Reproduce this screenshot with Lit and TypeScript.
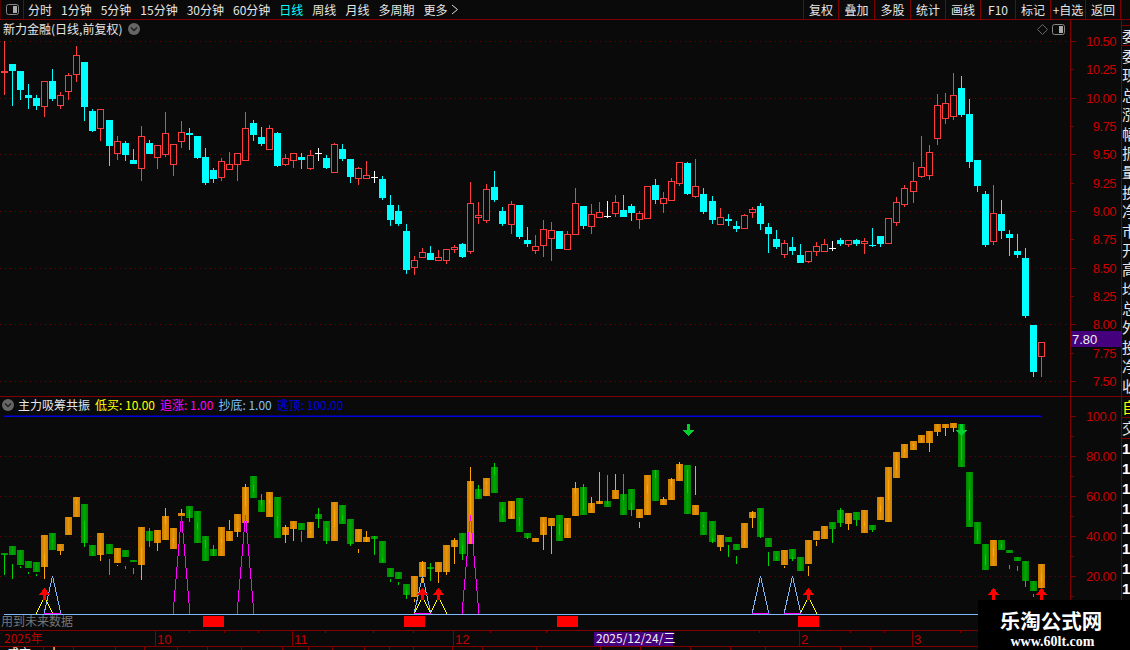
import { LitElement, html, svg, css } from "lit";
import { customElement } from "lit/decorators.js";

type Main = [string, number, number, number, number];
const M: Main[] = [
["r",71,73,41,95],["c",64,71,64,106],["c",71,90,71,100],["c",95,98,84,109],["c",98,106,95,110],
["r",81,107,81,117],["c",81,99,69,101],["r",95,106,92,109],["r",75,92,73,100],["r",55,75,46,82],
["c",62,107,62,121],["c",111,131,109,132],["r",109,129,109,141],["c",120,146,120,166],["r",141,154,136,160],
["c",143,155,141,161],["c",160,164,149,164],["r",136,169,126,181],["c",143,154,140,154],["r",145,158,145,169],
["r",133,155,112,157],["r",144,165,144,176],["r",132,142,121,148],["c",133,135,128,150],["c",136,158,136,159],
["c",157,183,148,185],["c",170,179,168,183],["r",161,178,158,181],["r",164,170,152,170],["r",153,165,153,181],
["r",128,161,112,161],["c",123,135,120,141],["c",137,144,127,146],["r",128,150,125,150],["c",133,166,132,167],
["r",158,165,154,166],["r",153,161,153,168],["c",157,160,153,169],["r",155,169,150,170],["w",153,154,148,161],
["c",158,168,155,169],["r",144,173,143,173],["c",149,159,144,161],["c",159,177,159,183],["r",168,179,167,185],
["r",175,179,161,179],["w",177,178,171,183],["c",179,198,176,200],["c",205,220,195,226],["c",211,224,205,226],
["c",231,270,224,274],["r",260,268,256,275],["r",252,258,248,258],["c",253,260,246,260],["r",257,261,250,261],
["r",249,261,249,264],["r",247,250,245,253],["c",244,257,243,258],["r",203,252,182,254],["r",215,218,202,224],
["r",189,221,184,223],["c",187,200,171,202],["c",211,224,207,226],["r",204,225,201,234],["c",205,237,205,239],
["c",240,244,227,247],["r",246,251,235,254],["r",229,246,220,257],["r",230,239,222,261],["c",231,249,231,249],
["r",234,250,231,250],["r",203,235,188,235],["c",206,226,206,229],["r",214,227,204,234],["r",212,218,202,218],
["w",216,217,201,218],["r",202,214,195,217],["c",210,217,195,217],["c",206,213,204,221],["r",213,220,211,229],
["r",186,219,186,219],["c",185,200,179,204],["r",198,204,192,213],["r",181,201,178,201],["r",162,184,162,186],
["c",163,194,162,195],["r",186,197,159,198],["c",194,212,188,214],["c",201,220,196,224],["r",217,225,208,225],
["c",219,221,214,226],["c",226,229,221,232],["r",215,229,214,229],["r",209,213,207,218],["c",206,224,203,230],
["c",227,234,223,253],["c",239,247,230,249],["r",243,255,240,258],["c",247,251,237,255],["c",255,263,244,263],
["r",251,262,251,263],["r",246,252,242,256],["r",244,252,239,252],["w",248,249,241,251],["c",240,244,238,246],
["r",240,245,240,247],["c",240,244,239,246],["r",241,244,238,254],["c",245,246,228,247],["c",236,244,236,247],
["r",218,244,218,244],["r",202,223,197,226],["r",188,205,185,207],["r",181,192,162,203],["r",167,177,136,178],
["r",152,176,145,180],["r",105,139,94,145],["r",103,119,93,124],["r",95,117,73,120],["c",88,115,76,117],
["c",114,162,99,168],["c",160,186,160,192],["c",194,245,191,247],["r",213,242,185,245],["c",214,231,200,239],
["c",234,238,230,256],["c",251,255,234,258],["c",258,316,248,318],["c",325,372,325,377],["r",342,357,342,377],
];

const L: Main[] = [
["g",553,555,555,575],["g",546,555,564,579],["g",550,565,566,568],["g",561,568,572,574],["g",562,572,574,576],
["o",535,567,554,579],["g",533,550,540,542],["o",544,551,551,555],["o",517,535,0,0],["o",497,517,501,504],
["g",504,543,521,547],["g",545,556,552,554],["o",533,555,553,561],["g",544,554,559,575],["o",548,563,565,566],
["g",550,557,566,569],["g",560,561,568,574],["o",527,565,548,580],["g",531,541,528,547],["o",530,543,543,551],
["o",516,540,508,524],["o",528,549,538,543],["o",513,516,509,516],["g",506,518,510,522],["g",511,543,523,529],
["g",536,561,540,548],["g",549,556,545,556],["o",527,556,539,543],["o",531,541,520,530],["o",514,532,528,537],
["o",487,523,484,506],["g",476,498,485,492],["g",500,512,494,505],["o",492,517,500,503],["g",497,538,516,527],
["o",527,535,525,543],["o",521,529,529,541],["g",523,530,531,542],["o",522,538,531,533],["g",514,519,508,528],
["g",521,541,528,544],["o",502,541,510,527],["g",505,524,515,521],["g",519,544,540,546],["o",529,542,549,553],
["o",537,542,531,542],["g",536,539,536,555],["g",541,563,558,562],["g",568,577,579,582],["g",572,579,582,585],
["g",584,595,590,599],["o",576,597,599,602],["o",562,577,561,583],["g",567,568,563,581],["o",562,572,572,583],
["o",545,572,570,575],["o",540,547,538,564],["g",533,554,545,560],["o",481,544,467,520],["g",489,499,485,497],
["o",478,496,482,484],["g",467,493,463,475],["g",502,522,508,514],["o",501,519,511,518],["g",498,532,517,526],
["g",533,538,536,539],["o",538,542,0,0],["o",517,535,523,550],["o",518,526,526,554],["g",515,541,524,535],
["o",518,538,524,535],["o",488,516,482,493],["g",487,515,484,510],["o",503,513,497,508],["o",501,504,472,504],
["g",501,507,475,504],["o",490,499,474,490],["g",494,515,474,500],["g",489,510,503,516],["o",509,518,522,528],
["o",475,515,485,493],["g",470,501,470,478],["o",499,505,497,500],["o",479,500,478,485],["o",464,481,462,470],
["g",465,514,470,493],["o",505,515,466,495],["g",512,535,525,527],["g",521,542,538,543],["o",535,547,547,551],
["g",537,542,545,557],["g",544,550,556,564],["o",523,548,540,544],["o",512,518,511,528],["g",508,537,521,538],
["g",538,547,552,566],["g",551,561,557,559],["o",550,565,566,568],["g",549,559,557,561],["g",557,571,0,0],
["o",540,564,566,576],["o",531,540,541,546],["o",526,539,0,0],["g",522,529,529,543],["g",510,523,508,527],
["o",513,524,524,530],["g",512,520,520,526],["o",510,533,522,526],["g",525,530,530,532],["o",497,520,505,512],
["o",467,522,480,500],["o",452,478,460,470],["o",444,458,449,452],["o",441,450,444,446],["o",435,443,438,440],
["o",431,443,443,452],["o",424,432,432,436],["o",424,428,428,436],["o",423,428,428,432],["g",424,467,430,460],
["g",472,527,490,520],["g",522,544,530,540],["g",544,570,555,565],["o",540,566,548,556],["g",540,550,544,548],
["g",550,553,565,569],["g",557,561,566,571],["g",561,581,581,587],["g",581,591,594,597],["o",564,588,574,582],
];

const cx = (i: number) => Math.round(4 + 8.04 * i);
const BG = "#0a0a0a";
const RED = "#ff3c3c";
const AX = "#800000";

function mainCandle(d: Main, i: number) {
  const [t, top, bot, hi, lo] = d;
  const c = cx(i);
  const col = t === "r" ? RED : t === "c" ? "#00ffff" : "#ffffff";
  const wick = svg`<rect x=${c} y=${hi} width="1" height=${lo - hi} fill=${col}></rect>`;
  if (t === "w" || t === "c" || bot - top <= 2) {
    return svg`${wick}<rect x=${c - 3} y=${top} width="7" height=${bot - top} fill=${col}></rect>`;
  }
  return svg`${wick}<rect x=${c - 2.5} y=${top + 0.5} width="6" height=${bot - top - 1} fill=${BG} stroke=${col}></rect>`;
}

function lowerCandle(d: Main, i: number) {
  const [t, top, bot, w1, w2] = d;
  const c = cx(i);
  const fill = t === "o" ? "url(#gO)" : "url(#gG)";
  const wc = t === "o" ? "#ffa800" : "#00d400";
  return svg`<rect x=${c - 3} y=${top} width="7" height=${Math.max(bot - top, 2)} fill=${fill}></rect>
    ${w2 > w1 ? svg`<rect x=${c} y=${w1} width="1" height=${w2 - w1} fill=${wc}></rect>` : ""}`;
}

const peak = (c: number, top: number, col: string) =>
  svg`<polyline points="${c - 8},614 ${c + 0.5},${top} ${c + 9},614" fill="none" stroke=${col} stroke-width="1" shape-rendering="crispEdges"></polyline>`;

const up = (c: number) => svg`<path d="M${c - 5} 594.5L${c + 0.5} 588L${c + 6} 594.5L${c + 2} 594.5L${c + 2} 600L${c - 1} 600L${c - 1} 594.5Z" fill="#ff0000" shape-rendering="crispEdges"></path>`;
const down = (c: number, y: number) => svg`<path d="M${c - 1} ${y}L${c + 2} ${y}L${c + 2} ${y + 6}L${c + 6} ${y + 6}L${c + 0.5} ${y + 12.5}L${c - 5} ${y + 6}L${c - 1} ${y + 6}Z" fill="#00d02c" shape-rendering="crispEdges"></path>`;

const dotted = (y: number) => svg`<line x1="0" x2="1066" y1=${y + 0.5} y2=${y + 0.5} stroke="#6e0000" stroke-dasharray="1 4"></line>`;
const tick = (y: number, len: number) => svg`<rect x="1071" y=${y} width=${len} height="1" fill=${AX}></rect>`;
const label = (y: number, s: string) => svg`<text class="ax" x="1116" y=${y + 5} text-anchor="end">${s}</text>`;

const topPrices = ["10.50", "10.25", "10.00", "9.75", "9.50", "9.25", "9.00", "8.75", "8.50", "8.25", "8.00", "7.75", "7.50"];
const lowVals = [["100.0", 416], ["80.00", 456], ["60.00", 496], ["40.00", 536], ["20.00", 576]] as [string, number][];
const menu = ["分时", "1分钟", "5分钟", "15分钟", "30分钟", "60分钟", "日线", "周线", "月线", "多周期", "更多"];
const btns = ["复权", "叠加", "多股", "统计", "画线", "F10", "标记", "+自选", "返回"];
const sideTop = "委委现总涨幅振量换净市开高均总外投净收".split("");
const sideLow = ["交", "1", "1", "1", "1", "1", "1", "1", "1", "1"];
const dateSeps = [[155, "10"], [292, "11"], [453, "12"], [799, "2"], [912, "3"]] as [number, string][];
const dateTicks = [189, 224, 258, 325, 373, 413, 490, 546, 640, 759, 850, 884, 960, 1010];
const tailSeps = [43, 73, 115, 144, 177, 207, 241, 282, 308, 332, 364, 389, 413, 452, 482, 536, 600, 640, 690, 730, 765, 840, 870];

@customElement("app-root")
export class AppRoot extends LitElement {
  static styles = css`
    :host { display: block; width: 1130px; height: 650px; overflow: hidden; background: #0a0a0a; color: #e6e6e6;
      font-family: "Noto Sans CJK SC", "Liberation Sans", sans-serif; font-size: 12px; line-height: 1; }
    .root { position: relative; width: 1130px; height: 650px; display: flex; flex-direction: column; }
    .top { height: 19px; border-bottom: 1px solid #800000; display: flex; align-items: center; flex: none; }
    .tog { width: 22px; height: 19px; border-right: 1px solid #800000; border-left: 1px solid #500000; display: flex; align-items: center; justify-content: center; flex: none; }
    .menu { display: flex; gap: 9px; margin-left: 4px; align-items: center; }
    .menu .on { color: #00ffff; }
    .more { display: flex; align-items: center; gap: 4px; }
    .btns { margin-left: auto; margin-right: 9px; display: flex; height: 19px; border-left: 1px solid #800000; }
    .btn { width: 34px; border-right: 1px solid #800000; display: flex; align-items: center; justify-content: center; white-space: nowrap; }
    .btn.w { width: 35px; }
    .body { flex: 1; display: flex; min-height: 0; }
    .left { width: 1121px; flex: none; display: flex; flex-direction: column; }
    .pane { position: relative; flex: none; display: block; }
    .pane svg, .date svg, .tail svg { display: block; }
    .p1 { height: 376px; border-bottom: 1px solid #800000; }
    .p2 { height: 233px; border-bottom: 1px solid #800000; }
    .title { position: absolute; left: 3px; top: 3px; display: flex; align-items: center; gap: 6px; white-space: nowrap; }
    .dot { width: 12px; height: 12px; border-radius: 50%; background: #666; display: flex; align-items: center; justify-content: center; flex: none; }
    .tools { position: absolute; left: 1037px; top: 4px; display: flex; align-items: center; gap: 4px; }
    .ind { position: absolute; left: 2px; top: 2px; display: flex; align-items: center; gap: 5px; white-space: nowrap; }
    .ind .name { margin-left: -1px; }
    .y { color: #ffff00; } .m { color: #ff00ff; } .b { color: #80c0ff; } .d { color: #0000e0; }
    .date { height: 15px; border-bottom: 1px solid #800000; flex: none; }
    .tail { flex: 1; overflow: hidden; }
    .side { width: 9px; flex: none; border-left: 1px solid #800000; overflow: hidden; display: flex; flex-direction: column; }
    .sideTop { height: 377px; padding-top: 5px; box-sizing: border-box; border-bottom: 1px solid #800000; overflow: hidden; flex: none; }
    .sc { height: 19.4px; font-size: 15px; line-height: 19px; white-space: nowrap; }
    .sc.first { border-top: 1px solid #800000; border-bottom: 1px solid #800000; height: 19px; }
    .sideLow { flex: 1; overflow: hidden; }
    .sl { height: 20px; font-size: 15px; line-height: 20px; }
    .sl.yel { color: #ffff00; border-bottom: 1px solid #800000; }
    .sl.nb { border-bottom: 1px solid #800000; }
    .sl.num { font-weight: 700; font-family: "Liberation Sans", sans-serif; color: #fff; }
    .ax { font: 13px "Liberation Sans", sans-serif; letter-spacing: -0.5px; fill: #c80000; }
    .lbl { font: 13px "Liberation Sans", "Noto Sans CJK SC", sans-serif; fill: #c00000; }
    .lblc { font: 12px "Noto Sans CJK SC", sans-serif; fill: #c00000; }
    .datebox { font: 12px "Noto Sans CJK SC", sans-serif; fill: #f0f0f0; }
    .p7 { font: 13px "Liberation Sans", sans-serif; fill: #f0f0f0; }
    .futures { font: 12px "Noto Sans CJK SC", sans-serif; fill: #777; }
    .tailt { font: 12px "Noto Sans CJK SC", sans-serif; fill: #fff; }
    .mark { position: absolute; left: 978px; top: 600px; width: 152px; height: 50px; background: #000; color: #fff;
      display: flex; flex-direction: column; align-items: center; padding-top: 9px; box-sizing: border-box; }
    .mark .cn { font: 700 20.5px "Noto Sans CJK SC", sans-serif; line-height: 22px; margin-left: -6px; }
    .mark .url { font: 700 14px "Liberation Serif", serif; margin-top: 3px; margin-left: -3px; }
  `;

  render() {
    const toggle = html`<svg width="13" height="11" viewBox="0 0 13 11"><rect x="0.5" y="0.5" width="12" height="10" rx="2" fill="none" stroke="#888"></rect><rect x="7" y="2" width="4" height="7" fill="#aaa"></rect></svg>`;
    const chev = html`<svg width="8" height="6" viewBox="0 0 8 6"><path d="M1 1.5L4 4.5L7 1.5" fill="none" stroke="#1c1c1c" stroke-width="1.3"></path></svg>`;
    return html`<div class="root">
      <div class="top">
        <div class="tog">${toggle}</div>
        <div class="menu">
          ${menu.map((m) => m === "更多"
            ? html`<div class="more"><span>${m}</span><svg width="8" height="11" viewBox="0 0 8 11"><path d="M1 1L6.5 5.5L1 10" fill="none" stroke="#ddd"></path></svg></div>`
            : html`<span class=${m === "日线" ? "on" : ""}>${m}</span>`)}
        </div>
        <div class="btns">${btns.map((b) => html`<div class="btn ${b === "叠加" || b === "多股" ? "w" : ""}">${b}</div>`)}</div>
      </div>
      <div class="body">
        <div class="left">
          <div class="pane p1">
            <svg width="1121" height="376" viewBox="0 20 1121 376">
              ${[41, 98, 154, 211, 268, 324, 381].map(dotted)}
              ${M.map(mainCandle)}
              <rect x="1070" y="20" width="1" height="376" fill=${AX}></rect>
              ${topPrices.map((p, i) => {
                const y = Math.round(41 + i * 28.33);
                return svg`${tick(y, i % 2 ? 3 : 5)}${label(y, p)}`;
              })}
              <rect x="1071" y="331" width="50" height="16" fill="#45007d"></rect>
              <text class="p7" x="1072" y="344">7.80</text>
            </svg>
            <div class="title"><span>新力金融(日线,前复权)</span><div class="dot">${chev}</div></div>
            <div class="tools">
              <svg width="11" height="11" viewBox="0 0 11 11"><path d="M5.5 0.5L10.5 5.5L5.5 10.5L0.5 5.5Z" fill="none" stroke="#666"></path></svg>
              ${toggle}
            </div>
          </div>
          <div class="pane p2">
            <svg width="1121" height="233" viewBox="0 397 1121 233">
              <defs>
                <linearGradient id="gO"><stop offset="0" stop-color="#c87c00"></stop><stop offset="0.5" stop-color="#e8940a"></stop><stop offset="1" stop-color="#c87c00"></stop></linearGradient>
                <linearGradient id="gG"><stop offset="0" stop-color="#008400"></stop><stop offset="0.5" stop-color="#00a800"></stop><stop offset="1" stop-color="#008400"></stop></linearGradient>
              </defs>
              ${[456, 496, 536, 576].map(dotted)}
              <rect x="4" y="415.5" width="1037" height="1.5" fill="#0000e0"></rect>
              ${L.map(lowerCandle)}
              ${[181, 245, 470].map((c) => peak(c, 515, "#ff00ff"))}
              ${[52, 422, 760, 792].map((c) => peak(c, 576, "#80b8ff"))}
              ${[44, 422, 438, 808, 1041].map((c) => peak(c, 597, "#ffff00"))}
              <rect x="4" y="614" width="1066" height="1" fill="#80b8ff"></rect>
              ${[52, 422, 760, 792].map((c) => svg`<rect x=${c - 8} y="613" width="17" height="1" fill="#ff00ff"></rect>`)}
              ${[44, 422, 438, 808, 993, 1041].map(up)}
              ${down(688, 424)}${down(961, 424)}
              <rect x="1070" y="397" width="1" height="233" fill=${AX}></rect>
              ${lowVals.map(([s, y]) => svg`${tick(y, 5)}${label(y, s)}`)}
              ${[436, 476, 516, 556, 596].map((y) => tick(y, 3))}
              <text class="futures" x="1" y="626">用到未来数据</text>
              ${[203, 404, 557, 798].map((x) => svg`<rect x=${x} y="616" width="21" height="11" fill="#ff0000"></rect>`)}
            </svg>
            <div class="ind">
              <div class="dot">${chev}</div>
              <span class="name">主力吸筹共振</span>
              <span class="y">低买: 10.00</span>
              <span class="m">追涨: 1.00</span>
              <span class="b">抄底: 1.00</span>
              <span class="d">逃顶: 100.00</span>
            </div>
          </div>
          <div class="date">
            <svg width="1121" height="15" viewBox="0 631 1121 15">
              ${dateTicks.map((x) => svg`<rect x=${x} y="631" width="1" height="2" fill=${AX}></rect>`)}
              ${dateSeps.map(([x, s]) => svg`<rect x=${x} y="631" width="1" height="15" fill=${AX}></rect><text class="lbl" x=${x + 2} y="644">${s}</text>`)}
              <text class="lblc" x="4" y="643">2025年</text>
              <rect x="1070" y="631" width="1" height="15" fill=${AX}></rect>
              <rect x="594" y="632" width="79" height="14" fill="#45007d"></rect>
              <text class="datebox" x="596" y="643">2025/12/24/三</text>
            </svg>
          </div>
          <div class="tail">
            <svg width="1121" height="3" viewBox="0 647 1121 3">
              ${tailSeps.map((x) => svg`<rect x=${x} y="647" width="1" height="3" fill=${AX}></rect>`)}
              <text class="tailt" x="7" y="658">成交</text>
              <text class="tailt" x="48" y="658">十</text>
            </svg>
          </div>
        </div>
        <div class="side">
          <div class="sideTop">
            ${sideTop.map((c, i) => html`<div class="sc ${i === 0 ? "first" : ""}">${c}</div>`)}
          </div>
          <div class="sideLow">
            <div class="sl yel">自</div>
            ${sideLow.map((c, i) => html`<div class="sl ${i === 0 ? "nb" : "num"}">${c}</div>`)}
          </div>
        </div>
      </div>
      <div class="mark"><div class="cn">乐淘公式网</div><div class="url">www.60lt.com</div></div>
    </div>`;
  }
}
